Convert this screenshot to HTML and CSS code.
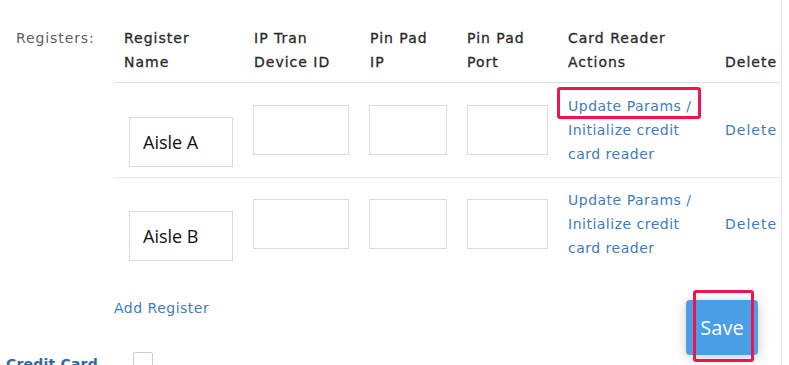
FILE: index.html
```html
<!DOCTYPE html>
<html lang="en">
<head>
<meta charset="utf-8">
<title>Registers</title>
<link rel="stylesheet" href="styles.css">
</head>
<body>
<div class="page">
  <div class="registers">
    <div class="reg-label">Registers:</div>
    <div class="table">
      <div class="tr th-row">
        <div class="th">Register Name</div>
        <div class="th">IP Tran Device ID</div>
        <div class="th">Pin Pad IP</div>
        <div class="th">Pin Pad Port</div>
        <div class="th">Card Reader Actions</div>
        <div class="th">Delete</div>
      </div>
      <div class="tr body-row">
        <div class="td"><input class="inp inp-name" type="text" value="Aisle A"></div>
        <div class="td"><input class="inp inp-ip" type="text"></div>
        <div class="td"><input class="inp inp-pip" type="text"></div>
        <div class="td"><input class="inp inp-port" type="text"></div>
        <div class="td actions"><a class="link">Update Params</a> / <a class="link">Initialize credit card reader</a></div>
        <div class="td"><a class="link del">Delete</a></div>
      </div>
      <div class="tr body-row last">
        <div class="td"><input class="inp inp-name" type="text" value="Aisle B"></div>
        <div class="td"><input class="inp inp-ip" type="text"></div>
        <div class="td"><input class="inp inp-pip" type="text"></div>
        <div class="td"><input class="inp inp-port" type="text"></div>
        <div class="td actions"><a class="link">Update Params</a> / <a class="link">Initialize credit card reader</a></div>
        <div class="td"><a class="link del">Delete</a></div>
      </div>
    </div>
  </div>
  <div class="add-row"><a class="link">Add Register</a></div>
  <div class="cc-row">
    <div class="cc-label">Credit Card</div>
    <span class="checkbox"></span>
  </div>
  <button class="save" type="button">Save</button>
  <div class="mark mark-update"></div>
  <div class="mark mark-save"></div>
</div>
</body>
</html>
```
FILE: styles.css
```css
html, body {
  margin: 0;
  padding: 0;
  background: #fff;
}
body {
  font-family: "DejaVu Sans", Verdana, sans-serif;
  font-size: 14px;
  letter-spacing: 0.5px;
  color: #333;
}
.page {
  position: relative;
  width: 781px;
  height: 365px;
  overflow: hidden;
  border-right: 1px solid #e4e6ea;
}
.registers {
  display: flex;
  padding-top: 18px;
}
.reg-label {
  width: 99px;
  padding-left: 16px;
  padding-top: 8px;
  line-height: 24px;
  color: #5f5f5f;
  letter-spacing: 0.9px;
}
.table {
  display: flex;
  flex-direction: column;
}
.tr {
  display: grid;
  grid-template-columns: 130px 116px 97px 101px 157px 66px;
}
.th-row {
  align-items: end;
  border-bottom: 1px solid #dde2e8;
}
.th {
  padding: 8px 10px;
  line-height: 24px;
  color: #2a2a2a;
  letter-spacing: 1px;
  -webkit-text-stroke: 0.3px #2a2a2a;
}
.body-row {
  align-items: center;
  border-bottom: 1px solid #e4e7eb;
}
.body-row.last {
  border-bottom: none;
}
.td {
  padding: 11px 10px;
  line-height: 24px;
}
.body-row.last .td {
  padding-top: 10px;
}
.inp {
  box-sizing: border-box;
  height: 50px;
  border: 1px solid #d6dae3;
  border-radius: 0;
  background: #fff;
  margin: 0;
  padding: 0 13px;
  font-family: "Open Sans", "Lato", sans-serif;
  font-size: 18px;
  letter-spacing: 0;
  color: #111;
  outline: none;
  display: block;
}
.inp-name {
  width: 104px;
  margin-left: 5px;
  margin-top: 12px;
  margin-bottom: -12px;
}
.inp-ip {
  width: 96px;
  margin-left: -1px;
}
.inp-pip {
  width: 78px;
  margin-left: -1px;
}
.inp-port {
  width: 81px;
}
.link {
  color: #3d7cbf;
  text-decoration: none;
}
.del {
  letter-spacing: 1px;
}
.actions {
  color: #3d7cbf;
}
.add-row {
  padding-left: 114px;
  margin-top: 25px;
  line-height: 24px;
}
.cc-row {
  display: flex;
  align-items: flex-start;
  margin-top: 33px;
}
.cc-label {
  width: 127px;
  padding-left: 6px;
  color: #2e6aa8;
  font-weight: bold;
  font-size: 14px;
  line-height: 18px;
  letter-spacing: 0.2px;
  margin-top: 2px;
}
.checkbox {
  display: block;
  width: 18px;
  height: 18px;
  border: 1px solid #c9ccd2;
  border-radius: 2px;
  margin-top: -1px;
}
.save {
  position: absolute;
  left: 686px;
  top: 300px;
  width: 72px;
  height: 55px;
  border: none;
  border-radius: 4px;
  background: #4a9ee6;
  color: #fff;
  font-family: "Open Sans", "Lato", sans-serif;
  font-size: 20px;
  letter-spacing: 0;
  box-shadow: 0 2px 12px rgba(0, 0, 0, 0.22);
  padding: 0;
}
.mark {
  position: absolute;
  border: 3px solid #ef1450;
  border-radius: 3px;
  box-sizing: border-box;
}
.mark-update {
  left: 557px;
  top: 87px;
  width: 144px;
  height: 32px;
}
.mark-save {
  left: 693px;
  top: 290px;
  width: 61px;
  height: 72px;
}
```
